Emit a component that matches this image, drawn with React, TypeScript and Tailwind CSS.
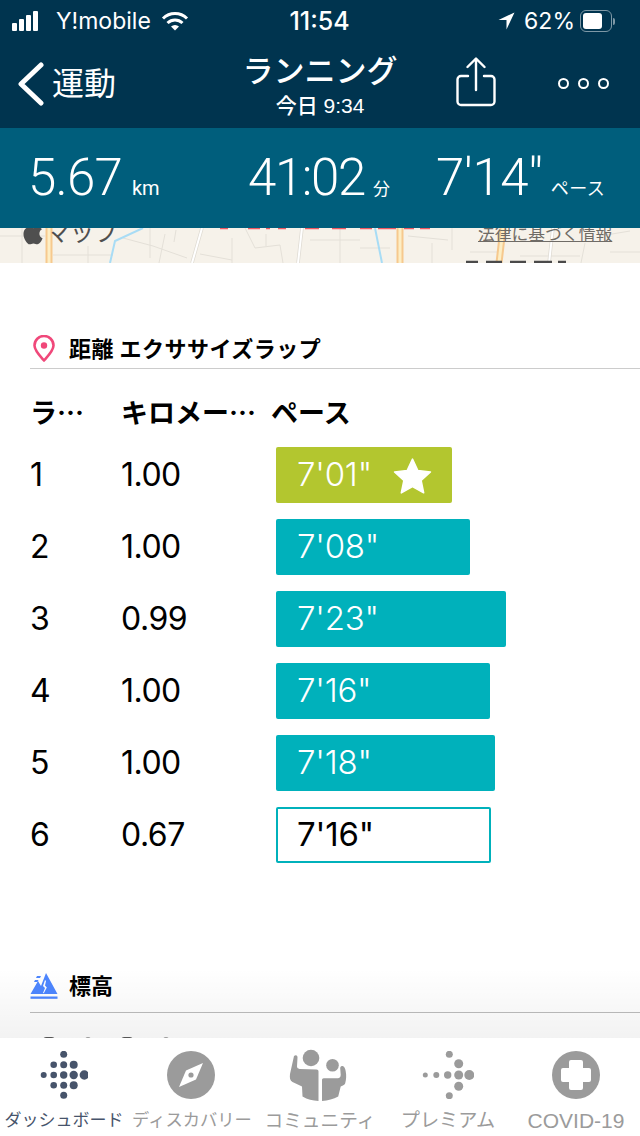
import { FaApple } from "react-icons/fa";

const jp = "font-['Liberation_Sans','Noto_Sans_CJK_JP',sans-serif]";
const cjk = "font-['Noto_Sans_CJK_JP',sans-serif]";
const inter = "font-['Inter','Noto_Sans_CJK_JP',sans-serif]";
const thin = "font-['Roboto','Noto_Sans_CJK_JP',sans-serif]";

type Lap = { lap: number; km: string; pace: string; width: number; kind: "best" | "normal" | "partial" };

const laps: Lap[] = [
  { lap: 1, km: "1.00", pace: "7'01\"", width: 176, kind: "best" },
  { lap: 2, km: "1.00", pace: "7'08\"", width: 194, kind: "normal" },
  { lap: 3, km: "0.99", pace: "7'23\"", width: 230, kind: "normal" },
  { lap: 4, km: "1.00", pace: "7'16\"", width: 214, kind: "normal" },
  { lap: 5, km: "1.00", pace: "7'18\"", width: 219, kind: "normal" },
  { lap: 6, km: "0.67", pace: "7'16\"", width: 215, kind: "partial" },
];

function StatusBar() {
  return (
    <div className={`flex h-[42px] items-center justify-between pl-[12px] pr-[25px] text-white ${inter}`}>
      <div className="flex w-[200px] items-center">
        <div className="flex items-end gap-[2px]">
          <span className="h-[8px] w-[5px] rounded-[1px] bg-white" />
          <span className="h-[12px] w-[5px] rounded-[1px] bg-white" />
          <span className="h-[16px] w-[5px] rounded-[1px] bg-white" />
          <span className="h-[20px] w-[5px] rounded-[1px] bg-white" />
        </div>
        <span className="ml-[18px] text-[23px] leading-none">Y!mobile</span>
        <svg width="28" height="20" viewBox="0 0 28 20" className="ml-[10px]" fill="none" stroke="white" strokeWidth="3">
          <path d="M2 7.500a17 17 0 0 1 24 0" />
          <path d="M6.500 12a11 11 0 0 1 15 0" />
          <path d="M14 19.500l-4-4a6 6 0 0 1 8 0z" fill="white" stroke="none" />
        </svg>
      </div>
      <span className="ml-[12px] text-[25px] font-medium leading-none">11:54</span>
      <div className="flex w-[200px] items-center justify-end">
        <svg width="17" height="18" viewBox="0 0 17 18">
          <path d="M16.500 0.500L0.500 8h8v9.500z" fill="white" />
        </svg>
        <span className="ml-[9px] text-[23px] leading-none">62%</span>
        <div className="ml-[5px] flex h-[22px] w-[32px] items-center rounded-[6px] border border-[#7e98a6] p-[2px]">
          <div className="h-full w-[19px] rounded-[3px] bg-white" />
        </div>
        <span className="ml-[1px] h-[7px] w-[2px] rounded-r bg-[#7e98a6]" />
      </div>
    </div>
  );
}

function NavBar() {
  return (
    <div className="flex h-[86px] items-start text-white">
      <div className="flex w-[220px] items-center pl-[17px] pt-[20px]">
        <svg width="27" height="44" viewBox="0 0 27 44" fill="none" stroke="white" strokeWidth="5" strokeLinecap="round" strokeLinejoin="round">
          <path d="M24 3L4 22l20 19" />
        </svg>
        <span className="ml-[8px] text-[32px] leading-none">運動</span>
      </div>
      <div className="flex w-[200px] flex-col items-center pt-[11px]">
        <span className="text-[31px] font-medium leading-[38px]">ランニング</span>
        <span className="mt-[3px] text-[21px] font-medium leading-[24px]">今日 9:34</span>
      </div>
      <div className="flex w-[110px] justify-center pl-[2px] pt-[15px]">
        <svg width="40" height="50" viewBox="0 0 40 50" fill="none" stroke="white" strokeWidth="2.400" strokeLinecap="round" strokeLinejoin="round">
          <path d="M12 19H5a3.500 3.500 0 0 0-3.500 3.500v22A3.500 3.500 0 0 0 5 48h30a3.500 3.500 0 0 0 3.500-3.500v-22A3.500 3.500 0 0 0 35 19h-7" />
          <path d="M20 33V2M11.500 10L20 1.500 28.500 10" />
        </svg>
      </div>
      <div className="ml-[28px] flex items-center gap-[9px] pt-[36px]">
        <span className="h-[11px] w-[11px] rounded-full border-2 border-white" />
        <span className="h-[11px] w-[11px] rounded-full border-2 border-white" />
        <span className="h-[11px] w-[11px] rounded-full border-2 border-white" />
      </div>
    </div>
  );
}

function Stats() {
  return (
    <div className={`flex h-[100px] items-baseline bg-[#005e7c] pl-[28px] pt-[12px] text-white ${thin}`}>
      <div className="w-[220px]">
        <span className="text-[51px] font-light tracking-[-0.800px]">5.67</span>
        <span className="ml-[10px] text-[20px]">km</span>
      </div>
      <div className="w-[188px]">
        <span className="text-[51px] font-light tracking-[-1.400px]">41:02</span>
        <span className="ml-[8px] text-[17px]">分</span>
      </div>
      <div>
        <span className="text-[51px] font-light tracking-[-0.300px]">7'14"</span>
        <span className="ml-[8px] text-[18px] tracking-[0.400px]">ペース</span>
      </div>
    </div>
  );
}

function MapStrip() {
  return (
    <div className="relative h-[35px] overflow-hidden bg-[#f6f2ea]">
      <svg width="640" height="35" viewBox="0 0 640 35" fill="none" className="block">
        <g stroke="#e4e0d8" strokeWidth="1">
          <path d="M0 8h45M22 0v35M53 27h60M88 18v17M123 10l30 8 34 12M150 0v30M165 6l-6 29M176 2l-2 12" />
          <path d="M200 26l32 6M232 10v25M245 0l10 20 25-3 3 18M266 6v12M310 12h50M340 0v35M360 20h30" />
          <path d="M408 8l40 4M432 15v20M452 0v22M470 24h30M520 28h60M585 15l-4 20M600 8l30-5M610 24h30" />
        </g>
        <g stroke="#dfdbd3" strokeWidth="3.500">
          <path d="M202 0l-10 35M302 0l-4 35M553 0l-4 35" />
        </g>
        <g stroke="#ffffff" strokeWidth="2">
          <path d="M202 0l-10 35M302 0l-4 35M553 0l-4 35" />
        </g>
        <g stroke="#f6c98e" strokeWidth="7">
          <path d="M49 0v35M400 0v35M503 0l-4 35" />
        </g>
        <g stroke="#fdeec4" strokeWidth="3">
          <path d="M49 0v35M400 0v35M503 0l-4 35" />
        </g>
        <path d="M143 0l-28 13-5 22M375 0l7 35" stroke="#a8dcf5" strokeWidth="2" />
        <path d="M220 0.500h8M248 0.500h12M266 0.500h4M278 0.500h8M305 0.500h14M332 0.500h14M360 0.500h12M378 0.500h18M404 0.500h10M420 0.500h10" stroke="#ee5a62" strokeWidth="1.500" />
        <path d="M466 34h12M486 34h16M510 34h16M534 34h18M558 34h8" stroke="#4a4a4a" strokeWidth="2.500" />
      </svg>
      <div className={`absolute left-[20px] top-[-9px] flex items-center text-[#4f4f4f] ${jp}`}>
        <FaApple size={26} />
        <span className="text-[24px] leading-[28px]">マップ</span>
      </div>
      <span className={`absolute left-[478px] top-[-4px] text-[16.800px] leading-[22px] text-[#6f6b66] underline ${jp}`}>
        法律に基づく情報
      </span>
    </div>
  );
}

function PinIcon() {
  return (
    <svg width="22" height="27" viewBox="0 0 22 27" fill="none" className="ml-[3px] shrink-0">
      <path d="M11 25.500C7 21 1.500 15.500 1.500 10.500a9.500 9.500 0 0 1 19 0C20.500 15.500 15 21 11 25.500z" stroke="#f0487a" strokeWidth="2.600" strokeLinejoin="round" />
      <circle cx="11" cy="10.500" r="3.200" fill="#f0487a" />
    </svg>
  );
}

function MountainIcon() {
  return (
    <svg width="28" height="26" viewBox="0 0 28 26" className="block shrink-0">
      <path d="M0.500 21L8 8l3 5 5-13 11.500 21z" fill="#4d86ff" />
      <path d="M7 3h4l-1 2H6zM5 7h3.500l-1 2H4z" fill="#4d86ff" />
      <path d="M15 7l-2 6 2 2-2 5 .8.3 3-5.800-1.800-2 1-4.500z" fill="white" />
      <rect x="0.500" y="23.500" width="27" height="2.300" fill="#4d86ff" />
    </svg>
  );
}

function DashboardIcon({ color }: { color: string }) {
  return (
    <svg width="48" height="48" viewBox="0 0 48 48" fill={color}>
      <circle cx="23.700" cy="3.300" r="3.500" />
      <circle cx="13.700" cy="13.700" r="3.300" />
      <circle cx="23.700" cy="13.700" r="3.500" />
      <circle cx="33.700" cy="13.700" r="4" />
      <circle cx="3.700" cy="24" r="3" />
      <circle cx="13.700" cy="24" r="3.300" />
      <circle cx="23.700" cy="24" r="3.700" />
      <circle cx="33.700" cy="24" r="4.200" />
      <circle cx="44.300" cy="24" r="4.700" />
      <circle cx="13.700" cy="34.300" r="3.300" />
      <circle cx="23.700" cy="34.300" r="3.500" />
      <circle cx="33.700" cy="34.300" r="4" />
      <circle cx="23.700" cy="44.300" r="3.500" />
    </svg>
  );
}

function CompassIcon() {
  return (
    <svg width="48" height="48" viewBox="0 0 48 48" className="-ml-[2px]">
      <circle cx="24" cy="24" r="24" fill="#9b9b9b" />
      <path d="M36 12L19 19.500 12 36l17-7.500z" fill="white" />
      <circle cx="24" cy="24" r="2.600" fill="#9b9b9b" />
    </svg>
  );
}

function CommunityIcon() {
  return (
    <svg width="62" height="52" viewBox="0 0 62 52" fill="#9b9b9b">
      <circle cx="22" cy="9" r="8.300" />
      <circle cx="43.500" cy="16.300" r="6.300" />
      <path d="M5 7c2-1.500 3.500-.5 3.500 1.500L8 17.500c.2 1.500 1 2 2.500 2.500l17 .5c1.300 0 2 .7 2 2V52c-6-.5-11-1.500-16-4.500L13 37.500 3.500 33C1 31.500 0.500 29 1 25z" />
      <path d="M33 52V31c0-1 .7-1.700 1.700-1.700h14c2 0 3-1.500 3-3.500l-.5-6.500c0-2 1.300-3 3-2 1.500 1 2 2.500 2.500 5 .8 4 .6 8-.5 12-.3 1.300-2 2.200-4.500 3.200l-2.500 10C44.500 50 39 51.500 33 52z" />
    </svg>
  );
}

function PremiumIcon() {
  return (
    <svg width="52" height="48" viewBox="0 0 52 48" fill="#9b9b9b">
      <circle cx="27.300" cy="3.300" r="3.500" />
      <circle cx="36.700" cy="12.700" r="4.500" />
      <circle cx="3.300" cy="24" r="2.500" />
      <circle cx="14.300" cy="24" r="3" />
      <circle cx="25.700" cy="24" r="3.700" />
      <circle cx="36.700" cy="24" r="4.500" />
      <circle cx="47.300" cy="24" r="5" />
      <circle cx="36.700" cy="35.300" r="4.500" />
      <circle cx="27.300" cy="44.700" r="3.500" />
    </svg>
  );
}

function CovidIcon() {
  return (
    <svg width="48" height="48" viewBox="0 0 48 48">
      <circle cx="24" cy="24" r="24" fill="#9b9b9b" />
      <path d="M19 9h10a2 2 0 0 1 2 2v6h6a2 2 0 0 1 2 2v10a2 2 0 0 1-2 2h-6v6a2 2 0 0 1-2 2H19a2 2 0 0 1-2-2v-6h-6a2 2 0 0 1-2-2V19a2 2 0 0 1 2-2h6v-6a2 2 0 0 1 2-2z" fill="white" />
    </svg>
  );
}

function StarIcon() {
  return (
    <svg width="39" height="37" viewBox="0 0 38 36" className="ml-[21px] shrink-0">
      <path
        d="M19 2l5.200 11.200 12.300 1.400-9.100 8.300 2.500 12-10.900-6.100-10.900 6.100 2.500-12L1.500 14.600l12.300-1.400z"
        fill="white"
        stroke="white"
        strokeWidth="1.500"
        strokeLinejoin="round"
      />
    </svg>
  );
}

function LapBar({ lap }: { lap: Lap }) {
  if (lap.kind === "partial") {
    return (
      <div
        className="flex h-[56px] items-center rounded-[2px] border-2 border-[#00b1bb] pl-[19px] text-[33px] tracking-[-0.200px] text-black"
        style={{ width: lap.width }}
      >
        {lap.pace}
      </div>
    );
  }
  return (
    <div
      className={`flex h-[56px] items-center rounded-[2px] pl-[21px] text-[33px] font-light tracking-[-0.200px] text-white ${
        lap.kind === "best" ? "bg-[#b3c62f]" : "bg-[#00b1bb]"
      }`}
      style={{ width: lap.width }}
    >
      {lap.pace}
      {lap.kind === "best" && <StarIcon />}
    </div>
  );
}

const tabs = [
  { label: "ダッシュボード", icon: <DashboardIcon color="#47546b" />, active: true, size: "text-[17px]" },
  { label: "ディスカバリー", icon: <CompassIcon />, active: false, size: "text-[17.300px]" },
  { label: "コミュニティ", icon: <CommunityIcon />, active: false, size: "text-[18.700px]" },
  { label: "プレミアム", icon: <PremiumIcon />, active: false, size: "text-[19.200px]" },
  { label: "COVID-19", icon: <CovidIcon />, active: false, size: "text-[21px]" },
];

export default function App() {
  return (
    <div className={`flex h-[1136px] w-[640px] flex-col overflow-hidden bg-white ${jp}`}>
      <header className="bg-[#00344f]">
        <StatusBar />
        <NavBar />
      </header>
      <Stats />

      <main className="relative min-h-0 flex-1 overflow-hidden">
        <MapStrip />

        <section className="mt-[67px] pl-[30px]">
          <div className="flex h-[39px] items-start gap-[14px] border-b border-[#cccccc] pt-[5px]">
            <PinIcon />
            <h2 className={`-mt-[1px] text-[22px] font-bold leading-[26px] tracking-[0.500px] text-black ${cjk}`}>距離 エクササイズラップ</h2>
          </div>
          <div className={`flex h-[78px] items-center pt-[8px] text-[27px] font-bold text-black ${cjk}`}>
            <span className="w-[91px]">ラ…</span>
            <span className="w-[150px]">キロメー…</span>
            <span>ペース</span>
          </div>
          <div className={`flex flex-col gap-4 ${inter}`}>
            {laps.map((lap) => (
              <div key={lap.lap} className="flex h-[56px] items-center text-[32px] text-black">
                <span className="w-[91px]">{lap.lap}</span>
                <span className="w-[155px] tracking-[-0.500px]">{lap.km}</span>
                <LapBar lap={lap} />
              </div>
            ))}
          </div>
        </section>

        <section className="mt-[110px] pl-[30px]">
          <div className="flex h-[40px] items-start gap-[11px] border-b border-[#bdbdbd]">
            <MountainIcon />
            <h2 className={`-mt-[3px] text-[22px] font-bold leading-[28px] text-black ${cjk}`}>標高</h2>
          </div>
        </section>

        <div className="absolute bottom-0 left-0 h-[70px] w-full bg-gradient-to-b from-transparent to-black/5" />
        <div className="absolute bottom-[-6px] left-[43px] flex gap-[30px]">
          <span className="h-[7px] w-[12px] rounded-full bg-[#555555]" />
          <span className="h-[7px] w-[6px] rounded-full bg-[#999999]" />
          <span className="h-[7px] w-[12px] rounded-full bg-[#555555]" />
          <span className="h-[7px] w-[6px] rounded-full bg-[#999999]" />
        </div>
      </main>

      <nav className="grid h-[98px] grid-cols-5 bg-white">
        {tabs.map((tab) => (
          <div key={tab.label} className="flex flex-col items-center">
            <div className="flex h-[72px] items-center pt-[2px]">{tab.icon}</div>
            <span
              className={`whitespace-nowrap leading-[21px] ${tab.size} ${
                tab.active ? "text-[#47546b]" : "text-[#9b9b9b]"
              }`}
            >
              {tab.label}
            </span>
          </div>
        ))}
      </nav>
    </div>
  );
}
